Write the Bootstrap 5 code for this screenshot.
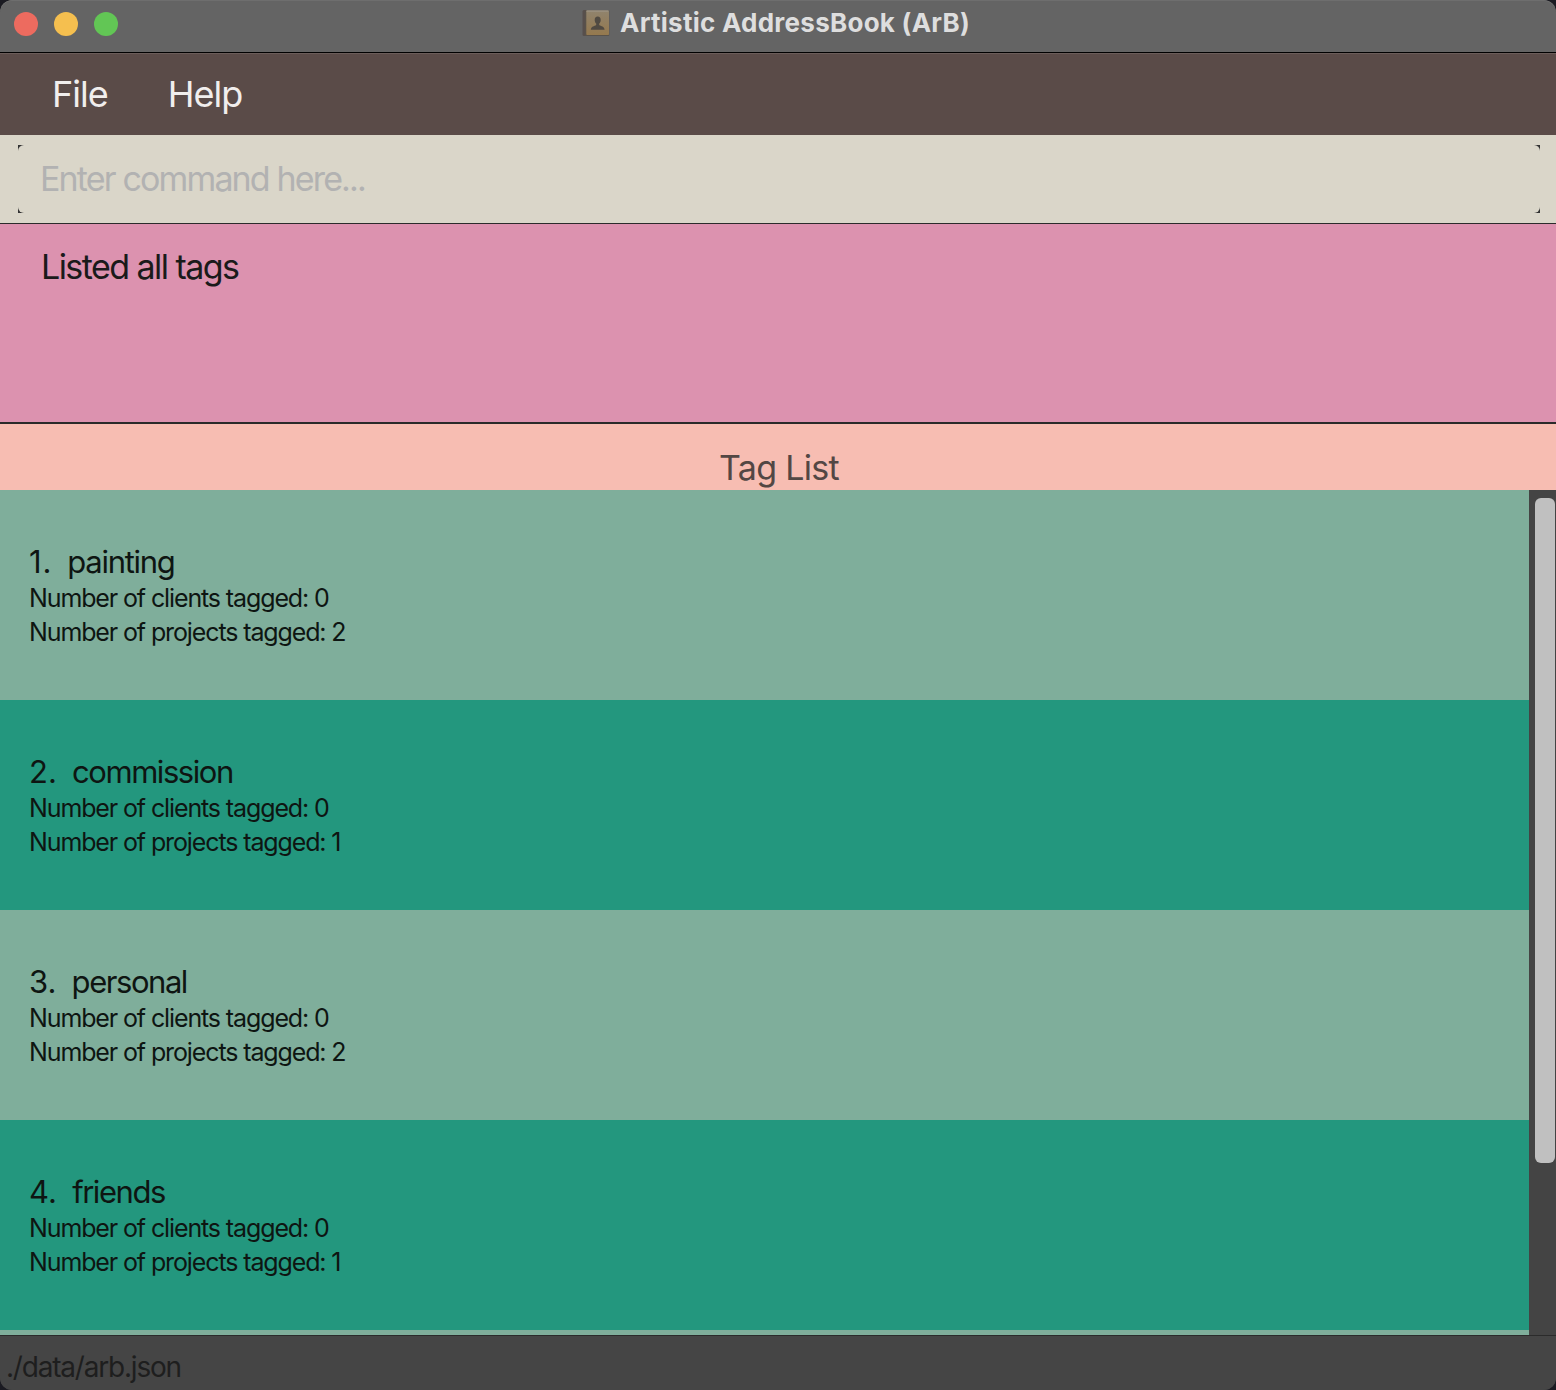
<!DOCTYPE html>
<html lang="en">
<head>
<meta charset="utf-8">
<title>Artistic AddressBook (ArB)</title>
<link href="https://cdn.jsdelivr.net/npm/bootstrap@5.3.0/dist/css/bootstrap.min.css" rel="stylesheet">
<style>
body{background:#1b1b22;font-family:Inter,"Liberation Sans",sans-serif;font-kerning:normal}
.app-window{width:1556px;height:1390px;background:#444;border-radius:12px}
.title-bar{height:53px;background:#646464;border-bottom:1px solid #000;padding:0 14px 7px;box-shadow:inset 0 1px 0 #6e6e6e;border-radius:12px 12px 0 0}
.lights{gap:16px;padding-top:3px;width:568px}
.light{width:24px;height:24px}
.light-close{background:#ed6b5f}.light-min{background:#f5bf4f}.light-max{background:#62c655}
.window-title{font-size:26px;line-height:45px;font-weight:700;color:#dedede;letter-spacing:.26px;margin-left:10px}
.menu-strip{height:82px;background:#5a4b48;border-top:1px solid #6b5d5a;padding:0 0 2px 52px;gap:60px;font-size:36px;color:#f1eeed;letter-spacing:-1px}
.command-pane{height:89px;background:#dad6c9;border-bottom:1px solid #2b2b2b;padding:10px 16px 10px 18px}
.command-frame{height:68px;background:#333}
.command-input,.command-input:focus{height:68px;background:#dad6c9;border:0;border-radius:6px;padding:0 22px 2px;font-size:34px;letter-spacing:-1.85px;box-shadow:none}
.command-input::placeholder{color:#b2b2b2;opacity:1}
.result-pane{height:200px;background:#dc92af;border-bottom:2px solid #2a2a2a;padding:23px 41px;font-size:34px;line-height:40px;letter-spacing:-1.55px;color:#1a1a1a}
.list-heading{height:66px;background:#f7bdb2;padding-top:24px;padding-left:2px;font-size:34px;line-height:40px;letter-spacing:-.7px;color:#534744}
.list-area{height:845px}
.tag-row{height:210px;background:#7fae9b;padding:52px 29px 0;color:#0e1512}
.tag-row:nth-child(even){background:#23977e}
.tag-name{font-size:31px;line-height:39px;letter-spacing:-1.45px}
.tag-num{letter-spacing:.1px;margin-right:15px}
.tag-row:first-child .tag-num{letter-spacing:.9px}
.tag-row:first-child .tag-name{letter-spacing:-1.3px}
.tag-info{font-size:25px;line-height:34px;letter-spacing:-1.12px}
.scroll-track{width:27px;background:#444;padding:8px 1px 0 6px}
.scroll-thumb{height:665px;background:#c0c0c0;border-radius:6px}
.status-strip{height:55px;border-top:1px solid #2b2b2b;background:#454545;border-radius:0 0 12px 12px;padding:7px 0 0 6px;font-size:28px;line-height:48px;letter-spacing:-1.2px;color:#1e1e1e}
</style>
</head>
<body>
<main class="app-window d-flex flex-column overflow-hidden">
  <header class="title-bar d-flex align-items-center flex-shrink-0">
    <div class="lights d-flex">
      <span class="light light-close rounded-circle"></span>
      <span class="light light-min rounded-circle"></span>
      <span class="light light-max rounded-circle"></span>
    </div>
    <svg width="28" height="28" viewBox="0 0 28 28" aria-hidden="true">
      <defs><linearGradient id="cover" x1="0" y1="0" x2="0" y2="1"><stop offset="0" stop-color="#90836d"/><stop offset="1" stop-color="#95794e"/></linearGradient></defs>
      <rect x=".5" y="1" width="6" height="26" rx="1.5" fill="#574f4c"/>
      <rect x="3" y="1.2" width="24.3" height="25.8" rx="1" fill="#59524a"/>
      <rect x="4.3" y="1.5" width="22.7" height="24.5" rx=".8" fill="url(#cover)"/>
      <path d="M4.5 2H26.5" stroke="#a29a8c"/>
      <path d="M15.7 7.5c-2.1 0-3 1.5-3 3.5 0 1.6.6 2.8 1.5 3.6v1.5c-1.8 1.2-5.2 1.5-5.4 4.7h13.8c-.2-3.2-3.6-3.5-5.4-4.7v-1.5c.9-.8 1.5-2 1.5-3.6 0-2-.9-3.5-3-3.5z" fill="#504a42"/>
    </svg>
    <span class="window-title text-nowrap">Artistic AddressBook (ArB)</span>
  </header>
  <nav class="menu-strip d-flex align-items-center flex-shrink-0"><span>File</span><span>Help</span></nav>
  <section class="command-pane flex-shrink-0">
    <div class="command-frame"><input class="command-input form-control" type="text" placeholder="Enter command here..." aria-label="Command"></div>
  </section>
  <section class="result-pane flex-shrink-0">Listed all tags</section>
  <div class="list-heading text-center flex-shrink-0">Tag List</div>
  <section class="list-area d-flex flex-shrink-0 overflow-hidden">
    <div class="flex-grow-1">
      <div class="tag-row"><div class="tag-name d-flex"><span class="tag-num">1.</span><span>painting</span></div><div class="tag-info">Number of clients tagged: 0</div><div class="tag-info">Number of projects tagged: 2</div></div>
      <div class="tag-row"><div class="tag-name d-flex"><span class="tag-num">2.</span><span>commission</span></div><div class="tag-info">Number of clients tagged: 0</div><div class="tag-info">Number of projects tagged: 1</div></div>
      <div class="tag-row"><div class="tag-name d-flex"><span class="tag-num">3.</span><span>personal</span></div><div class="tag-info">Number of clients tagged: 0</div><div class="tag-info">Number of projects tagged: 2</div></div>
      <div class="tag-row"><div class="tag-name d-flex"><span class="tag-num">4.</span><span>friends</span></div><div class="tag-info">Number of clients tagged: 0</div><div class="tag-info">Number of projects tagged: 1</div></div>
      <div class="tag-row"></div>
    </div>
    <div class="scroll-track"><div class="scroll-thumb"></div></div>
  </section>
  <footer class="status-strip flex-shrink-0">./data/arb.json</footer>
</main>
<script src="https://cdn.jsdelivr.net/npm/bootstrap@5.3.0/dist/js/bootstrap.bundle.min.js"></script>
</body>
</html>
